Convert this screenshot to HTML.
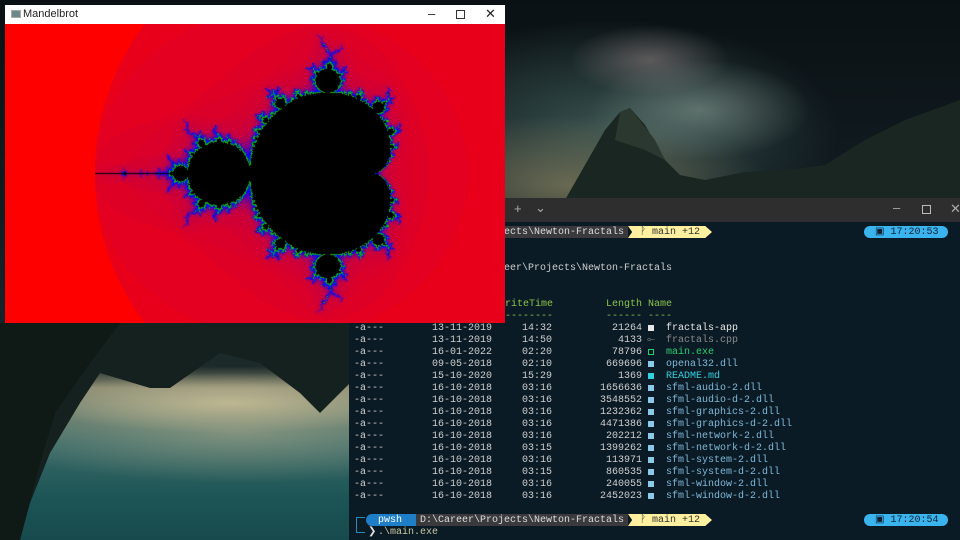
<!DOCTYPE html>
<html><head><meta charset="utf-8">
<style>
*{margin:0;padding:0;box-sizing:border-box}
html,body{width:960px;height:540px;overflow:hidden;background:#0b1a20}
#bg{position:absolute;left:0;top:0;width:960px;height:540px;
background:
radial-gradient(ellipse 110px 50px at 700px 110px, rgba(150,170,160,.5), transparent),
radial-gradient(ellipse 80px 35px at 650px 60px, rgba(170,150,150,.45), transparent),
radial-gradient(ellipse 200px 70px at 570px 185px, rgba(150,140,100,.6), transparent),
radial-gradient(ellipse 230px 110px at 610px 130px, rgba(70,100,95,.75), transparent),
linear-gradient(180deg,#0a1114 0%,#16232a 60%,#283630 100%);}
#bl{position:absolute;left:0;top:323px;width:350px;height:217px;
background:
radial-gradient(ellipse 200px 30px at 230px 80px, rgba(200,190,150,.85), transparent),
radial-gradient(ellipse 260px 50px at 240px 110px, rgba(170,170,140,.6), transparent),
linear-gradient(180deg,#1c2a2a 0%,#1c2a2a 20%,#8a8a72 30%,#3a6a68 55%,#1d5556 80%,#174a4c 100%);}
.mono{font-family:"Liberation Mono",monospace;font-size:10px;line-height:12px;white-space:pre;position:absolute}
#term{position:absolute;left:349px;top:198px;width:611px;height:342px;background:#0b1b25}
#tabs{position:absolute;left:0;top:0;width:611px;height:24px;background:#2e2e2e;color:#aaa;font-family:"Liberation Sans",sans-serif;font-size:13px}
</style></head><body>
<div id="bg"></div>
<svg style="position:absolute;left:505px;top:0" width="455" height="200">
<path d="M60 200 L100 130 L115 112 L125 108 L140 125 L160 160 L175 175 L200 180 L240 172 L280 170 L320 165 L360 140 L400 120 L455 100 L455 200Z" fill="#1a2622"/>
<path d="M115 112 L125 108 L150 140 L160 160 L140 150 L110 140Z" fill="#2a3830"/>
</svg>
<div id="bl"></div>
<svg style="position:absolute;left:0;top:323px" width="350" height="217">
<path d="M0 0 L350 0 L350 60 L320 90 L300 70 L260 40 L220 30 L170 65 L150 65 L100 50 L80 80 L50 130 L30 180 L20 217 L0 217Z" fill="#14211f"/>
<path d="M0 0 L120 0 L90 40 L55 90 L40 140 L20 217 L0 217Z" fill="#0f1a16"/>
</svg>

<div id="term">
 <div id="tabs"><span style="position:absolute;left:165px;top:3px">+</span><span style="position:absolute;left:186px;top:2px">⌄</span>
 <span style="position:absolute;left:544px;top:2px">–</span><span style="position:absolute;left:573px;top:7px;width:9px;height:9px;border:1px solid #bbb"></span><span style="position:absolute;left:601px;top:3px">✕</span></div>
</div>
<div id="lines"></div>

<div style="position:absolute;left:5px;top:5px;width:500px;height:19px;background:#fff;font-family:'Liberation Sans',sans-serif;font-size:11px;color:#222">
 <span style="position:absolute;left:6px;top:5px;width:10px;height:8px;background:#6a8a8a;border:1px solid #aaa"></span>
 <span style="position:absolute;left:18px;top:3px">Mandelbrot</span>
 <span style="position:absolute;left:423px;top:1px;font-size:13px">–</span>
 <span style="position:absolute;left:451px;top:5px;width:9px;height:9px;border:1px solid #333"></span>
 <span style="position:absolute;left:480px;top:1px;font-size:13px">✕</span>
</div>
<canvas id="m" width="500" height="299" style="position:absolute;left:5px;top:24px"></canvas>
<script>
var L=document.getElementById('lines'),h='';
function t(x,y,s,c){h+='<div class="mono" style="left:'+x+'px;top:'+(y-5)+'px;color:'+(c||'#cfcfcf')+'">'+s+'</div>';}
function box(x,y,c,o){h+='<div style="position:absolute;left:'+x+'px;top:'+(y-3)+'px;width:6px;height:6px;'+(o?'border:1px solid '+c:'background:'+c)+'"></div>';}
function prompt(y,time){
 h+='<div style="position:absolute;left:366px;top:'+(y-6)+'px;width:54px;height:12px;background:#1e7ec8;border-radius:6px 0 0 6px"></div>';
 h+='<div style="position:absolute;left:416px;top:'+(y-6)+'px;width:212px;height:12px;background:#3a3a3a"></div>';
 h+='<div style="position:absolute;left:628px;top:'+(y-6)+'px;width:84px;height:12px;background:#fff0a0;clip-path:polygon(0 0,92% 0,100% 50%,92% 100%,0 100%,5% 50%)"></div>';
 h+='<div style="position:absolute;left:864px;top:'+(y-6)+'px;width:84px;height:12px;background:#3ab4ee;border-radius:6px"></div>';
 t(378,y,'pwsh','#fff');t(420,y,'D:\\Career\\Projects\\Newton-Fractals','#ddd');
 t(640,y,'ᚹ main +12','#333');t(875,y,'▣ 17:20:'+time,'#123');
}
prompt(232,'53');
t(402,268,'Directory: D:\\Career\\Projects\\Newton-Fractals');
t(354,304,'Mode','#8bc34a');t(475,304,'LastWriteTime','#8bc34a');t(606,304,'Length Name','#8bc34a');
t(354,316,'----','#8bc34a');t(475,316,'-------------','#8bc34a');t(606,316,'------ ----','#8bc34a');
var rows=[['13-11-2019','14:32','21264','f','fractals-app','#e8e8e8'],['13-11-2019','14:50','4133','c','fractals.cpp','#8a8a8a'],['16-01-2022','02:20','78796','e','main.exe','#2ecc71'],['09-05-2018','02:10','669696','d','openal32.dll','#7fb8d8'],['15-10-2020','15:29','1369','r','README.md','#30d0e0'],['16-10-2018','03:16','1656636','d','sfml-audio-2.dll'],['16-10-2018','03:16','3548552','d','sfml-audio-d-2.dll'],['16-10-2018','03:16','1232362','d','sfml-graphics-2.dll'],['16-10-2018','03:16','4471386','d','sfml-graphics-d-2.dll'],['16-10-2018','03:16','202212','d','sfml-network-2.dll'],['16-10-2018','03:15','1399262','d','sfml-network-d-2.dll'],['16-10-2018','03:16','113971','d','sfml-system-2.dll'],['16-10-2018','03:15','860535','d','sfml-system-d-2.dll'],['16-10-2018','03:16','240055','d','sfml-window-2.dll'],['16-10-2018','03:16','2452023','d','sfml-window-d-2.dll']];
rows.forEach(function(r,i){var y=328+i*12;t(354,y,'-a---');t(432,y,r[0]);t(522,y,r[1]);
 h+='<div class="mono" style="left:580px;width:62px;text-align:right;top:'+(y-5)+'px;color:#cfcfcf">'+r[2]+'</div>';
 if(r[3]=='f')box(648,y,'#e8e8e8');else if(r[3]=='c')t(647,y,'⟜','#8a8a8a');else if(r[3]=='e')box(648,y,'#2ecc71',1);else if(r[3]=='r')box(648,y,'#30d0e0');else box(648,y,'#8cc8e8');
 t(666,y,r[4],r[5]||'#7fb8d8');});
prompt(520,'54');
h+='<div style="position:absolute;left:356px;top:517px;width:9px;height:16px;border:1.5px solid #2a8ab8;border-right:none"></div>';
t(368,532,'❯','#ddd');t(378,532,'.\\main.exe','#c8c8a0');
L.innerHTML=h;

var c=document.getElementById('m'),x=c.getContext('2d'),im=x.createImageData(500,299),d=im.data,S=124.4;
for(var py=0;py<299;py++)for(var px=0;px<500;px++){
 var cr=(px+5-343)/S,ci=(py+24-173)/S,zr=0,zi=0,n=0,M=250;
 while(n<M){var zr2=zr*zr,zi2=zi*zi;if(zr2+zi2>4)break;zi=2*zr*zi+ci;zr=zr2-zi2+cr;n++;}
 var R,G,B;
 if(n>=M){R=G=B=0;}else{n=n-1;if(n<0)n=0;
  if(n==0){R=255;G=0;B=0;}
  else if(n<=8){var f=n/8;R=236-36*f;G=0;B=22+40*f;}
  else if(n<=20){var f=(n-8)/12;R=200*(1-f);G=0;B=62+193*f;}
  else if(n<45){var f=(n-20)/25;R=0;G=200*f;B=255*(1-f);}
  else{R=20;G=180;B=20;}}
 var k=(py*500+px)*4;d[k]=R;d[k+1]=G;d[k+2]=B;d[k+3]=255;}
x.putImageData(im,0,0);
</script>
</body></html>
